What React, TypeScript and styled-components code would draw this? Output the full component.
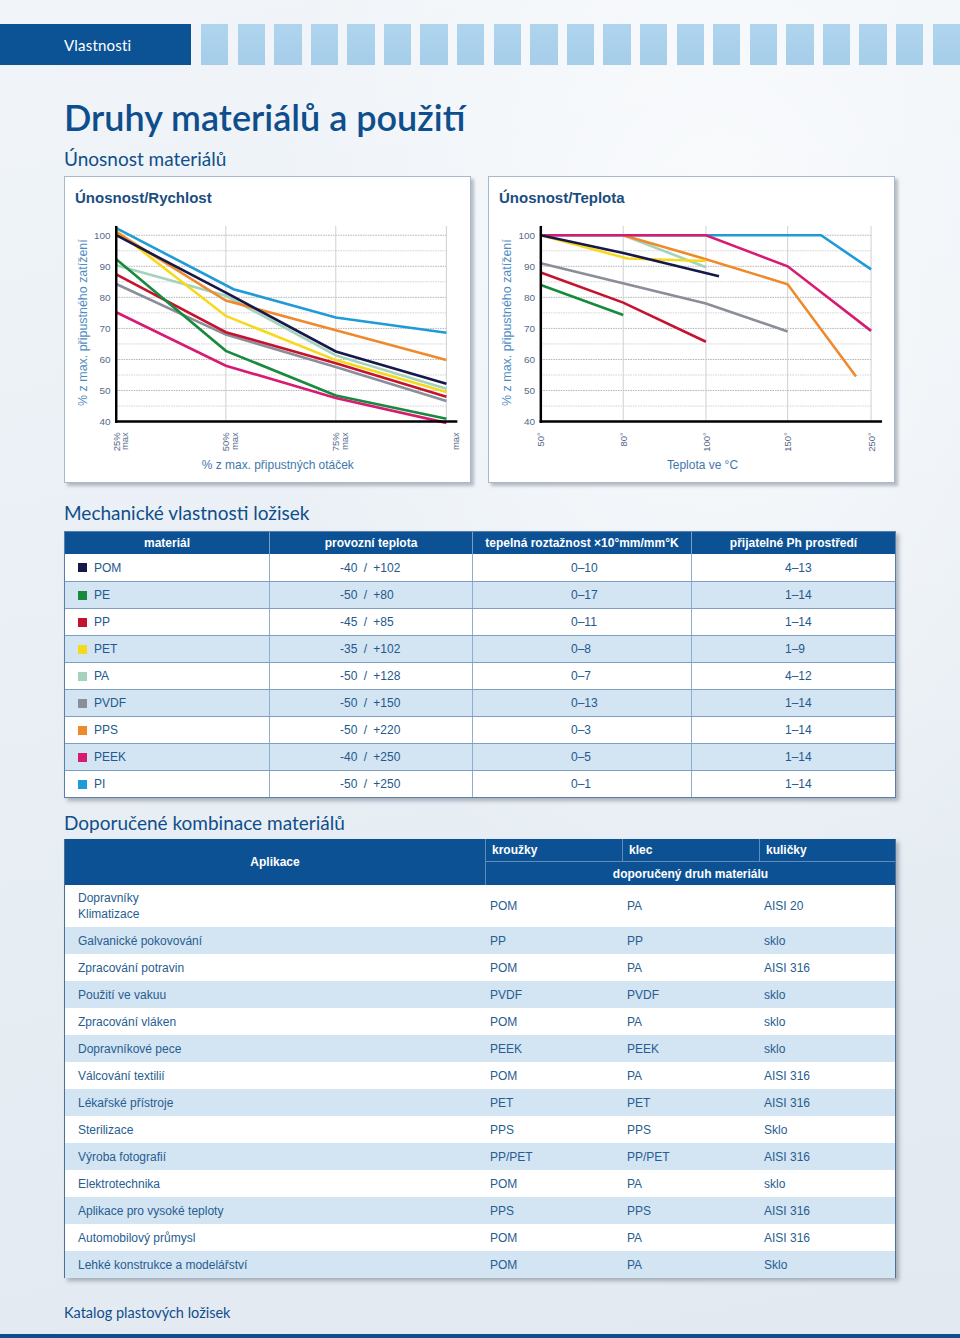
import React from 'react';
import styled, { createGlobalStyle } from 'styled-components';

const GlobalStyle = createGlobalStyle`
  html, body { margin: 0; padding: 0; }
  body { font-family: "Liberation Sans", Arial, sans-serif; }
`;

const Page = styled.div`
  width: 960px;
  height: 1338px;
  overflow: hidden;
  box-sizing: border-box;
  padding-top: 24px;
  display: flex;
  flex-direction: column;
  background:
    radial-gradient(ellipse at 75% 20%, rgba(255,255,255,0.7) 0%, rgba(255,255,255,0) 45%),
    linear-gradient(170deg, #f1f5f9 0%, #e9eff5 45%, #e2e9f0 100%);
`;

const HeaderBar = styled.div`
  display: flex;
  height: 41px;
  gap: 9.2px;
  overflow: hidden;
  flex: none;
`;

const SectionTab = styled.div`
  flex: none;
  width: 191px;
  margin-right: 0.8px;
  box-sizing: border-box;
  padding-left: 64px;
  background: #0c5396;
  color: #fff;
  font-family: Lato, "Open Sans", sans-serif;
  font-size: 15px;
  display: flex;
  align-items: center;
  letter-spacing: 0.2px;
`;

const Tile = styled.div`
  flex: none;
  width: 27.4px;
  background: linear-gradient(180deg, #afd5ee 0%, #a6cde9 100%);
`;

const Content = styled.div`
  padding: 0 64px;
  display: flex;
  flex-direction: column;
`;

const Title = styled.h1`
  margin: 30px 0 0;
  font-family: Lato, "Open Sans", sans-serif;
  font-weight: 600;
  font-size: 36px;
  line-height: 44px;
  color: #0f4e8c;
`;

const SubTitle = styled.h2<{ $mt: number }>`
  margin: ${p => p.$mt}px 0 0;
  font-family: Lato, "Open Sans", sans-serif;
  font-weight: 400;
  font-size: 19px;
  line-height: 24px;
  color: #0f4e8c;
`;

const ChartRow = styled.div`
  margin-top: 5px;
  display: flex;
  gap: 17px;
`;

const ChartCard = styled.div`
  width: 407px;
  height: 307px;
  box-sizing: border-box;
  border: 1px solid #a9b9ca;
  background: #fff;
  box-shadow: 3px 3px 3px rgba(70, 80, 100, 0.35);
  display: flex;
  flex-direction: column;
`;

const ChartTitle = styled.div`
  height: 36px;
  box-sizing: border-box;
  padding: 12px 0 0 10px;
  font-size: 15px;
  line-height: 18px;
  font-weight: bold;
  color: #1b4d80;
`;

const PropsTable = styled.div`
  margin-top: 6px;
  border: 1px solid #5d7fa6;
  background: #fff;
  box-shadow: 3px 3px 4px rgba(50, 60, 80, 0.35);
`;

const propsCols = '204px 203px 219px 1fr';

const PropsHead = styled.div`
  display: grid;
  grid-template-columns: ${propsCols};
  height: 22px;
  background: #0d5195;
`;

const HeadCell = styled.div`
  color: #fff;
  font-weight: bold;
  font-size: 12px;
  display: flex;
  align-items: center;
  justify-content: center;
  white-space: nowrap;
  border-left: 1px solid rgba(255, 255, 255, 0.45);
  &:first-child { border-left: none; }
`;

const PropsRow = styled.div<{ $alt: boolean }>`
  display: grid;
  grid-template-columns: ${propsCols};
  height: 27px;
  box-sizing: border-box;
  border-top: 1px solid #7d9ec2;
  background: ${p => (p.$alt ? '#d3e4f3' : '#fff')};
  &:first-child { border-top: none; }
`;

const PropsCell = styled.div<{ $pl: number; $ws?: number }>`
  display: flex;
  align-items: center;
  padding-left: ${p => p.$pl}px;
  font-size: 12px;
  word-spacing: ${p => p.$ws ?? 0}px;
  color: #23588c;
  border-left: 1px solid #8fadcc;
  &:first-child { border-left: none; }
`;

const Swatch = styled.span<{ $c: string }>`
  width: 9px;
  height: 9px;
  margin-right: 7px;
  background: ${p => p.$c};
  flex: none;
`;

const ComboTable = styled.div`
  margin-top: 4px;
  border-left: 1px solid #4d6f96;
  border-right: 1px solid #4d6f96;
  background: #fff;
  box-shadow: 3px 3px 4px rgba(50, 60, 80, 0.35);
`;

const comboCols = '420px 137px 137px 1fr';

const ComboHead = styled.div`
  display: grid;
  grid-template-columns: ${comboCols};
  grid-template-rows: 23px 23px;
  background: #0d5195;
  color: #fff;
  font-size: 12px;
  font-weight: bold;
`;

const AppHeadCell = styled.div`
  grid-row: 1 / span 2;
  display: flex;
  align-items: center;
  justify-content: center;
`;

const KindHeadCell = styled.div`
  display: flex;
  align-items: center;
  padding-left: 6px;
  border-left: 1px solid rgba(255, 255, 255, 0.35);
  border-bottom: 1px solid rgba(255, 255, 255, 0.35);
`;

const SpanHeadCell = styled.div`
  grid-column: 2 / span 3;
  display: flex;
  align-items: center;
  justify-content: center;
  border-left: 1px solid rgba(255, 255, 255, 0.35);
`;

const ComboRow = styled.div<{ $alt: boolean; $tall?: boolean }>`
  display: grid;
  grid-template-columns: ${comboCols};
  height: ${p => (p.$tall ? 42 : 27)}px;
  background: ${p => (p.$alt ? '#d3e4f3' : '#fff')};
  font-size: 12px;
  line-height: 16px;
  color: #285d90;
`;

const ComboCell = styled.div<{ $pl: number }>`
  display: flex;
  flex-direction: column;
  justify-content: center;
  padding-left: ${p => p.$pl}px;
`;

const Footer = styled.div`
  margin-top: 26px;
  padding-left: 64px;
  font-family: Lato, "Open Sans", sans-serif;
  font-size: 14.5px;
  line-height: 18px;
  color: #0f4e8c;
`;

const BottomBar = styled.div`
  margin-top: auto;
  height: 4px;
  background: #0d4f8c;
  flex: none;
`;

/* ---------- chart ---------- */

const C = {
  POM: '#16184a',
  PE: '#188a3c',
  PP: '#c4122f',
  PET: '#f6d91b',
  PA: '#a3d3bd',
  PVDF: '#8a8e98',
  PPS: '#ee8a2c',
  PEEK: '#d81b72',
  PI: '#1f9bd7',
};

type Series = { color: string; pts: [number, number][] };

const Y100 = 21.3;
const PER = 3.117;
const yOf = (v: number) => Y100 + (100 - v) * PER;

type ChartProps = {
  xs: number[];
  axisEnd: number;
  labels: string[][];
  series: Series[];
  yTitle: string;
  xTitle: string;
};

const ChartSvg: React.FC<ChartProps> = ({ xs, axisEnd, labels, series, yTitle, xTitle }) => {
  const ax = xs[0];
  const last = xs[xs.length - 1];
  const xOf = (i: number) => {
    const f = Math.floor(i);
    const c = Math.min(Math.ceil(i), xs.length - 1);
    if (f === c) return xs[f];
    return xs[f] + (i - f) * (xs[c] - xs[f]);
  };
  const grid: number[] = [];
  for (let v = 100; v > 40; v -= 5) grid.push(v);
  const yl = [100, 90, 80, 70, 60, 50, 40];
  return (
    <svg width={405} height={270} viewBox="0 -1 405 270" style={{ display: 'block' }}>
      {grid.map(v => (
        <line
          key={v}
          x1={ax}
          x2={last}
          y1={yOf(v)}
          y2={yOf(v)}
          stroke={v % 10 === 0 ? '#b3b3b3' : '#d2d2d2'}
          strokeWidth={1}
          strokeDasharray="1.5 1"
        />
      ))}
      {xs.slice(1).map(x => (
        <line key={x} x1={x} x2={x} y1={12} y2={yOf(40)} stroke="#d0d0d0" strokeWidth={1} />
      ))}
      {series.map((s, k) => (
        <polyline
          key={k}
          fill="none"
          stroke={s.color}
          strokeWidth={2.6}
          points={s.pts.map(([i, v]) => `${xOf(i).toFixed(1)},${yOf(v).toFixed(1)}`).join(' ')}
        />
      ))}
      <line x1={ax} x2={ax} y1={12} y2={yOf(40) + 1.2} stroke="#000" strokeWidth={2.5} />
      <line x1={ax - 1.2} x2={axisEnd} y1={yOf(40)} y2={yOf(40)} stroke="#000" strokeWidth={2.5} />
      {yl.map(v => (
        <text
          key={v}
          x={ax - 5.7}
          y={yOf(v) + 3.6}
          textAnchor="end"
          fontSize={10}
          fill="#55698a"
          fontFamily="Liberation Sans, Arial, sans-serif"
        >
          {v}
        </text>
      ))}
      {labels.map((ls, i) =>
        ls.map((t, j) => (
          <text
            key={`${i}-${j}`}
            transform={`translate(${xs[i] + 3.6 + j * 8.6},219) rotate(-90)`}
            textAnchor="end"
            fontSize={9.5}
            fill="#55698a"
            fontFamily="Liberation Sans, Arial, sans-serif"
          >
            {t}
          </text>
        ))
      )}
      <text
        transform={`translate(21,109) rotate(-90)`}
        textAnchor="middle"
        fontSize={12.5}
        fill="#4f8cc2"
        fontFamily="Liberation Sans, Arial, sans-serif"
      >
        {yTitle}
      </text>
      <text
        x={(ax + axisEnd) / 2 - 9}
        y={256}
        textAnchor="middle"
        fontSize={12}
        fill="#3f78ad"
        fontFamily="Liberation Sans, Arial, sans-serif"
      >
        {xTitle}
      </text>
    </svg>
  );
};

const speedSeries: Series[] = [
  { color: C.PA, pts: [[0, 90.3], [1, 80.5], [2, 61.3], [3, 50.6]] },
  { color: C.PVDF, pts: [[0, 84.3], [1, 68], [2, 57.6], [3, 46.6]] },
  { color: C.PP, pts: [[0, 87.4], [1, 68.8], [2, 58.8], [3, 48]] },
  { color: C.PET, pts: [[0, 101.4], [1, 74], [2, 59.8], [3, 49.5]] },
  { color: C.PPS, pts: [[0, 101], [1, 79], [2, 69.4], [3, 59.8]] },
  { color: C.PI, pts: [[0, 102.3], [1.07, 82.6], [2, 73.5], [3, 68.6]] },
  { color: C.POM, pts: [[0, 100], [1, 81.5], [2, 62.6], [3, 52.2]] },
  { color: C.PE, pts: [[0, 92.3], [1, 62.8], [2, 48.4], [3, 40.9]] },
  { color: C.PEEK, pts: [[0, 75.2], [1, 58], [2, 47.6], [3, 39.6]] },
];

const tempSeries: Series[] = [
  { color: C.PI, pts: [[0, 100], [3.4, 100], [4, 89]] },
  { color: C.PA, pts: [[1, 100], [2, 89.7]] },
  { color: C.PPS, pts: [[1, 100], [2, 92.3], [3, 84.2], [3.82, 54.5]] },
  { color: C.PEEK, pts: [[0, 100], [2, 100], [3, 90], [4, 69.2]] },
  { color: C.PET, pts: [[0, 100], [1.05, 92.5], [2, 91.7]] },
  { color: C.POM, pts: [[0, 100], [1, 94.3], [2.16, 86.8]] },
  { color: C.PVDF, pts: [[0, 91], [2, 78], [3, 69]] },
  { color: C.PP, pts: [[0, 88], [1, 78.3], [2, 65.7]] },
  { color: C.PE, pts: [[0, 84], [1, 74.3]] },
];

/* ---------- data ---------- */

const materials: [string, string, string, string, string][] = [
  ['POM', C.POM, '-40 / +102', '0–10', '4–13'],
  ['PE', C.PE, '-50 / +80', '0–17', '1–14'],
  ['PP', C.PP, '-45 / +85', '0–11', '1–14'],
  ['PET', C.PET, '-35 / +102', '0–8', '1–9'],
  ['PA', C.PA, '-50 / +128', '0–7', '4–12'],
  ['PVDF', C.PVDF, '-50 / +150', '0–13', '1–14'],
  ['PPS', C.PPS, '-50 / +220', '0–3', '1–14'],
  ['PEEK', C.PEEK, '-40 / +250', '0–5', '1–14'],
  ['PI', C.PI, '-50 / +250', '0–1', '1–14'],
];

const combos: [string, string, string, string][] = [
  ['Galvanické pokovování', 'PP', 'PP', 'sklo'],
  ['Zpracování potravin', 'POM', 'PA', 'AISI 316'],
  ['Použití ve vakuu', 'PVDF', 'PVDF', 'sklo'],
  ['Zpracování vláken', 'POM', 'PA', 'sklo'],
  ['Dopravníkové pece', 'PEEK', 'PEEK', 'sklo'],
  ['Válcování textilií', 'POM', 'PA', 'AISI 316'],
  ['Lékařské přístroje', 'PET', 'PET', 'AISI 316'],
  ['Sterilizace', 'PPS', 'PPS', 'Sklo'],
  ['Výroba fotografií', 'PP/PET', 'PP/PET', 'AISI 316'],
  ['Elektrotechnika', 'POM', 'PA', 'sklo'],
  ['Aplikace pro vysoké teploty', 'PPS', 'PPS', 'AISI 316'],
  ['Automobilový průmysl', 'POM', 'PA', 'AISI 316'],
  ['Lehké konstrukce a modelářství', 'POM', 'PA', 'Sklo'],
];

export default function App() {
  return (
    <Page>
      <GlobalStyle />
      <HeaderBar>
        <SectionTab>Vlastnosti</SectionTab>
        {Array.from({ length: 21 }).map((_, i) => (
          <Tile key={i} />
        ))}
      </HeaderBar>
      <Content>
        <Title>Druhy materiálů a použití</Title>
        <SubTitle $mt={8}>Únosnost materiálů</SubTitle>
        <ChartRow>
          <ChartCard>
            <ChartTitle>Únosnost/Rychlost</ChartTitle>
            <ChartSvg
              xs={[50.7, 160.7, 271, 382]}
              axisEnd={393}
              labels={[['25%', 'max'], ['50%', 'max'], ['75%', 'max'], ['', 'max']]}
              series={speedSeries}
              yTitle="% z max. připustného zatížení"
              xTitle="% z max. připustných otáček"
            />
          </ChartCard>
          <ChartCard>
            <ChartTitle>Únosnost/Teplota</ChartTitle>
            <ChartSvg
              xs={[51.3, 134, 217, 299, 382.7]}
              axisEnd={393.7}
              labels={[['50°'], ['80°'], ['100°'], ['150°'], ['250°']]}
              series={tempSeries}
              yTitle="% z max. připustného zatížení"
              xTitle="Teplota ve °C"
            />
          </ChartCard>
        </ChartRow>

        <SubTitle $mt={18}>Mechanické vlastnosti ložisek</SubTitle>
        <PropsTable>
          <PropsHead>
            <HeadCell>materiál</HeadCell>
            <HeadCell>provozní teplota</HeadCell>
            <HeadCell>tepelná roztažnost ×10°mm/mm°K</HeadCell>
            <HeadCell>přijatelné Ph prostředí</HeadCell>
          </PropsHead>
          <div>
            {materials.map(([name, color, temp, exp, ph], i) => (
              <PropsRow key={name} $alt={i % 2 === 1}>
                <PropsCell $pl={13}>
                  <Swatch $c={color} />
                  {name}
                </PropsCell>
                <PropsCell $pl={70} $ws={3}>{temp}</PropsCell>
                <PropsCell $pl={98}>{exp}</PropsCell>
                <PropsCell $pl={93}>{ph}</PropsCell>
              </PropsRow>
            ))}
          </div>
        </PropsTable>

        <SubTitle $mt={13}>Doporučené kombinace materiálů</SubTitle>
        <ComboTable>
          <ComboHead>
            <AppHeadCell>Aplikace</AppHeadCell>
            <KindHeadCell>kroužky</KindHeadCell>
            <KindHeadCell>klec</KindHeadCell>
            <KindHeadCell>kuličky</KindHeadCell>
            <SpanHeadCell>doporučený druh materiálu</SpanHeadCell>
          </ComboHead>
          <ComboRow $alt={false} $tall>
            <ComboCell $pl={13}>
              <span>Dopravníky</span>
              <span>Klimatizace</span>
            </ComboCell>
            <ComboCell $pl={5}>POM</ComboCell>
            <ComboCell $pl={5}>PA</ComboCell>
            <ComboCell $pl={5}>AISI 20</ComboCell>
          </ComboRow>
          {combos.map(([app, ring, cage, ball], i) => (
            <ComboRow key={app} $alt={i % 2 === 0}>
              <ComboCell $pl={13}>{app}</ComboCell>
              <ComboCell $pl={5}>{ring}</ComboCell>
              <ComboCell $pl={5}>{cage}</ComboCell>
              <ComboCell $pl={5}>{ball}</ComboCell>
            </ComboRow>
          ))}
        </ComboTable>
      </Content>
      <Footer>Katalog plastových ložisek</Footer>
      <BottomBar />
    </Page>
  );
}
